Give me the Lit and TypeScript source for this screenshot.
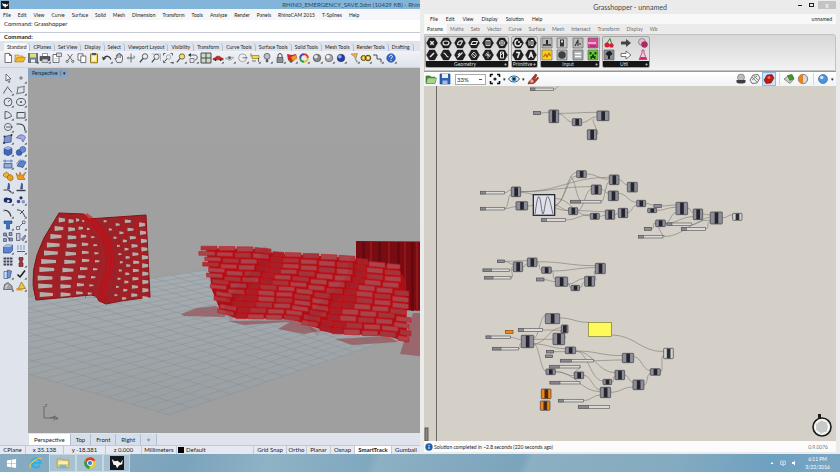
import { LitElement, html, svg, css } from "lit";
import { customElement } from "lit/decorators.js";
import { classMap } from "lit/directives/class-map.js";

type Shape = [d: string, fill?: string, stroke?: string, width?: number];
type Icon = { name: string; shapes: Shape[] };
type Pt = [number, number];

const K = "#3a3d42";
const Y = "#f0b72c";
const B = "#3f66b8";
const G = "#8f9399";
const circ = (x: number, y: number, r: number) =>
  `M${x - r} ${y}a${r} ${r} 0 1 0 ${2 * r} 0a${r} ${r} 0 1 0 ${-2 * r} 0z`;
const line = (d: string, stroke = K, width = 0.8): Shape => [d, "none", stroke, width];
const ico = (name: string, ...shapes: Shape[]): Icon => ({ name, shapes });
const corner: Shape = ["M11.6 9.4v2.2h-2.2z", "#333"];

const drawIcon = (i: Icon) => html`<svg class="icon" viewBox="0 0 12 12" aria-hidden="true">
  ${i.shapes.map(([d, f = "none", s = "none", w = 0.6]) =>
    svg`<path d=${d} fill=${f} stroke=${s} stroke-width=${w} stroke-linejoin="round"></path>`)}
</svg>`;

const ball = (name: string, base: string, shine: string): Icon =>
  ico(name, [circ(6, 6, 3.8), base, "#333", 0.5], [circ(4.9, 4.7, 1.8), shine], corner);

const toolbar: Icon[] = [
  ico("New", ["M3 1.5h4.5l2 2v7H3z", "#fff", K, 0.7], line("M7.5 1.5v2h2")),
  ico("Open", ["M1 10V3h3.5l1 1H9v1.5", "#f7d36b", "#a87512", 0.6], ["M1 10l2-4.6h8.5L9.3 10z", Y, "#a87512", 0.6]),
  ico("Save", ["M1.5 1.5h9v9h-9z", "#6c7f8f", "#2e3c48", 0.6], ["M3 1.5h6v4H3z", "#d8e27a"], ["M4 7.5h4v3H4z", "#eef"], corner),
  ico("Print", ["M3.5 1.5h5v3h-5z", "#fff", K, 0.5], ["M1 4.5h10v4H1z", "#55595f", "#222", 0.5], ["M3 7h6v3.5H3z", "#cfd3d8", K, 0.5], corner),
  ico("Document properties", ["M2 2.5h6v8H2z", "#fff", K, 0.7], ["M5.5 1h5v3.5h-5z", "#d7dbe2", K, 0.6], line("M3.5 6.5h3M3.5 8.3h3", G, 0.5)),
  ico("Cut", line("M3.5 2l4.6 6.4M8.5 2L3.9 8.4", K, 0.7), line(circ(3.2, 9.4, 1.1) + circ(8.8, 9.4, 1.1), K, 0.7)),
  ico("Copy", ["M2 1.8h5v6.4H2z", "#fff", K, 0.7], ["M4.8 4h5v6.6h-5z", "#fff", K, 0.7]),
  ico("Paste", ["M2.5 2h7v8.8h-7z", "#f5dc4e", "#7a5c10", 0.8], ["M4 1h4v2H4z", "#555"], ["M4 4h4v5H4z", "#fdf6c0"]),
  ico("Undo", line("M3 6.2c2-3 5.500-2.500 7 1.300", K, 1.3), ["M1 4.500l1 4 3-2z", K], corner),
  ico("Pan", line("M4 10.500L1.800 6.500l1.600.2V3.200h1.200V2h1.300V1.600h1.300v1h1.300v1.200h1V8l-1.200 2.600z", K, 0.7), line("M4.700 3v3M6.100 2v4M7.500 2.600V6", K, 0.5)),
  ico("Rotate view", line("M6 1.500v9M3 6h6.500", K, 0.7), ["M1.200 6l2.500-1.800v3.600zM10.500 5l-2-2v3z", G]),
  ico("Zoom", line(circ(7, 4.400, 2.700), K, 0.8), line("M5 6.500L1.800 10.300", K, 1.2)),
  ico("Zoom window", line("M1.500 2h9v7", G, 0.6), line(circ(6.500, 4.800, 2.600), K, 0.7), line("M4.600 6.800L1.800 10.300", K, 1.100)),
  ico("Zoom extents", line("M1.500 3.500v-2h2M8.500 1.500h2v2M1.500 8.500v2h2M8.500 10.500h2", K, 0.8), line(circ(6.500, 5, 2.200), G, 0.7), line("M5 6.800L2.500 9.500", K, 1), corner),
  ico("Zoom selected", [circ(7, 4.500, 2.700), "#f3df62", K, 0.7], line("M5 6.500L1.800 10.300", K, 1.100), corner),
  ico("Undo view", line("M2 3h6c3 0 3 5 0 5", K, 0.8), ["M1 3l3-2v4z", K], line("M3 6.500h4v4H3z", K, 0.6), corner),
  ico("Four views", ["M1 1h10v10H1z", "#cfd8c4", K, 0.9], line("M6 1v10M1 6h10", K, 0.9)),
  ico("Shade car", ["M1 6.500l2-.8 1.500-1.500h3.200l1.500 1.500 2 .6v1.500H1z", "#c92a27", "#6f1010", 0.4], [circ(3.500, 8, 0.9) + circ(8.700, 8, 0.9), "#222"], corner),
  ico("Set plane", ["M1 6.500l4-2 5 1-4 3z", "#c3c6ca", G, 0.5], [circ(5.500, 5.800, 1.200), "#555"], corner),
  ico("Object snap", [circ(5.500, 5.800, 3.900), "#eef0f3", G, 0.8], line("M5.500 5.800h5", K, 0.7), corner),
  ico("Annotate", ["M3 3.500h7v3H3z", "#f2dc3e", "#7a6a10", 0.6], line("M2 1.500v3M9.500 6v4M3 9h4", K, 0.7), corner),
  ico("Show objects", [circ(6, 4.300, 3), "#b9bcc0", K, 0.6], ["M4.800 7.200h2.400v3H4.800z", "#54585e"], corner),
  ico("Lock objects", line("M4 5.500V3.600a2 2 0 0 1 4 0v1.900", K, 1), ["M3 5.500h6v5H3z", "#8d9197", K, 0.6], corner),
  ico("Layers", ["M1 2l5 1 4-1 1 4-4 3.500L2 8z", "#d3261d"], ["M5 5l5-2 .8 4-4 2z", "#e89a25"], ["M2 8l5 1.500L5 11z", "#263"], corner),
  ico("Colour wheel", line("M6 2.200A3.800 3.800 0 0 1 9.800 6", "#e13d2e", 2), line("M9.800 6A3.800 3.800 0 0 1 6 9.800", "#e4c62c", 2), line("M6 9.800A3.800 3.800 0 0 1 2.200 6", "#2c9b49", 2), line("M2.200 6A3.800 3.800 0 0 1 6 2.200", "#5a3fc0", 2), corner),
  ball("Shaded", "#85888c", "#e9ebee"),
  ball("Rendered", "#a6a9ae", "#fafafa"),
  ball("Raytraced", "#1d3fa8", "#9ab4f2"),
  ico("Spotlight", ["M3 2l6.500-.5L8 6z", "#e9b34d", "#84551a", 0.4], ["M7 5l3 5-1.500.5-2.200-5z", G], corner),
  ico("Options", [circ(3.500, 6, 2.500) + circ(8, 6, 2.800), "#d9ba38", "#5e4b10", 1], [circ(3.500, 6, 0.8) + circ(8, 6, 0.9), "#fff"], corner),
  ico("Dimensions", line("M2 3h3v4h4v3", K, 0.9), [circ(2, 3, 1) + circ(9, 9.500, 1), G], corner),
  ico("Help", [circ(6, 6, 4.300), "#3564c9", "#1b3f94", 0.5], line("M4.600 4.700c0-2 3-1.800 2.800 0C7.200 5.600 6 5.800 6 7.100M6 8v1", "#fff", 1), corner),
];

const side: Icon[] = [
  ico("Select", ["M4 2l5 5H6.500L8 10l-1.300.5L5.400 7.500 4 9z", "#fff", K, 0.7]),
  ico("Point", line(circ(6, 6, 1.200), K, 0.7), corner),
  ico("Polyline", line("M1.500 9l4-6 4.500 5.500", K, 0.8), [circ(1.800, 9, 0.8) + circ(5.500, 3, 0.8), G], corner),
  ico("Curve", line("M2 9.500l1-6 6-1v6z", K, 0.7), [circ(2, 9.500, 1) + circ(3, 3.500, 1) + circ(9, 2.500, 1), G], corner),
  ico("Circle", line(circ(6, 6, 4), K, 0.8), line("M6 6l2.500-2.500", K, 0.7), corner),
  ico("Ellipse", line("M1.500 6a4.500 3.500 0 1 0 9 0a4.500 3.500 0 1 0-9 0z", K, 0.8), [circ(6, 6, 0.9), K], corner),
  ico("Arc", line("M3 10V2.500c4 0 6 2 6.500 5z", K, 0.8), corner),
  ico("Rectangle", line("M2 3.500h8v5.500H2z", K, 0.9), [circ(2, 9, 0.9) + circ(10, 3.500, 0.9), G], corner),
  ico("Polygon", line(circ(6, 6, 3.600), K, 0.7), line("M4 6h4M8.500 6h2.500", K, 0.8), corner),
  ico("Fillet", line("M1.500 3h3c3.500 0 5.500 2.500 5.500 7", K, 1.100), corner),
  ico("Surface", ["M2.500 3.500L9.500 2 9 9 2 10z", "#8095cf", "#2c3f80", 0.7], [circ(2.500, 3.500, 1) + circ(9.500, 2, 1) + circ(2, 10, 1), "#333"], corner),
  ico("Loft", ["M1.500 5C4 1 8 1 10.500 4L8 9C7 6 5 5 1.500 5z", "#a5a9dc", "#40479a", 0.6], corner),
  ico("Box", ["M2 3.500l4-1.800 4 1.500v5.500L6 10.800 2 9z", B, "#1f3a7c", 0.5], ["M2 3.500l4-1.800 4 1.500-4 1.600z", "#9fb6ea"], corner),
  ico("Sphere group", [circ(4.200, 7.500, 3), B, "#1f3a7c", 0.5], [circ(7.800, 4.500, 3), "#6d8bd4", "#1f3a7c", 0.5], corner),
  ico("Extrude", ["M2 5.500h8v4.500H2z", "#8fabd8", "#2a4a86", 0.7], line("M1 3h10M3 1.500v3M9 1.500v3", B, 0.8), corner),
  ico("Offset surface", ["M2 8l3-5 6 1-3 5.500z", "#5d84c6", "#23427e", 0.6], line("M1.500 6l3-4 5 .5", B, 0.7), corner),
  ico("Boolean", ["M1.500 4l3-2 2.500 2v2.500l-3 1-2.500-1.500z", Y, "#85570c", 0.6], ["M5.500 6l3-1.500L11 6.500v2.800L8.500 11 5.500 9z", "#e9a21f", "#85570c", 0.6]),
  ico("Explode", ["M1 3l3 3 1-4 1.500 3.800L11 2 8.500 6.500 10 9.500H3z", "#f09a1a", "#8a4c06", 0.5]),
  ico("Trim", ["M6.500 1l1 1v5h-2z", B, "#1b2f6b", 0.5], line("M1.500 8h5M6.500 8l3 2.500", K, 1.200), corner),
  ico("Split", ["M6.500 1l1 1v5h-2z", B, "#1b2f6b", 0.5], line("M1.500 8.500h9", K, 1.400)),
  ico("Join", [circ(4.300, 6, 2.600) + circ(7.500, 6.500, 2.600), "#1c2c66"], [circ(6.300, 7, 1.300), "#cdd6f2"], corner),
  ico("Group", [circ(3.500, 7.500, 1.800), "#3c4f99"], [circ(8.300, 7.800, 1.800), "#8692c4"], [circ(6, 3.800, 1.600), "#2b2e55"], corner),
  ico("Extend", line("M2 3.500c3.500-.5 6 2 7 6", K, 1.300), [circ(2, 3.500, 0.9), G], corner),
  ico("Edit points", line("M2 3c3.500-.5 6 2 8 7M5 7L9 3", K, 1), corner),
  ico("Text", ["M2 2h8v2.500H7.500V10H4.500V4.500H2z", "#3b74c4", "#173d78", 0.6], corner),
  ico("Move", line("M4.500 7.500L8 4", K, 0.7), line("M1.500 7.500h3v3h-3zM7.500 2h2.500v2.500H7.500z", "#5c6068", 0.8), corner),
  ico("Array", ["M1.500 2h3v3h-3zM7 1.500h3v3H7zM1.500 7.500h3v3h-3zM7 7h3.500v3H7z", "#8c9abb", "#34415f", 0.6], line("M4 4l4 5", K, 0.8)),
  ico("Scale", ["M1.500 2.500h3.500v7H1.500z", "#c4cde6", "#334", 0.6], ["M6.500 8l3.500-4 1 1-3 5z", "#8fa0d0", "#334", 0.5], corner),
  ico("Solid tools", ["M1.500 4L4 2h6.500v5.500L8 10H1.500z", "#5c83ce", "#1f3a7c", 0.6], ["M1.500 4L4 2h6.500L8 4z", "#a9c0ee"], corner),
  ico("Project", line("M3 2v5M6 2v5M9 2v5", "#7191cf", 0.9), line("M2 8.500h8", K, 0.8), corner),
  ico("Grid", line("M1.500 2.500h9M1.500 5.500h9M1.500 8.500h9", "#40485c", 1.800), line("M4.500 1.500v9M7.500 1.500v9", "#dfe2ea", 0.7)),
  ico("Clamp", ["M4 1.500h4v2.500H7.200v3H8v3.500H4V7h.8V4H4z", "#a93b3b", "#501515", 0.6], corner),
  ico("Pages", ["M2 3.500h4v7H2z", "#cfd9f0", "#2b447e", 0.6], ["M5.500 2l4 1-1.500 7-3-.8z", "#6d93d8", "#2b447e", 0.6], corner),
  ico("Check", line("M2.500 6.500L5 9l5-6.500", "#1e1e22", 1.500), corner),
  ico("Weights", ["M1.500 9.500l1-5 3.500-2 4 3.500.5 3.500z", "#9fa2a6", K, 0.6], line("M4 9V6l2-1", "#fff", 0.7), corner),
  ico("Light", ["M3 9L6.500 2l4 6.500z", "#eac83a", "#7a5a10", 0.6], ["M1.500 8h6v2.500h-6z", "#d79a2c"], corner),
];

const menus = ["File", "Edit", "View", "Curve", "Surface", "Solid", "Mesh", "Dimension", "Transform", "Tools", "Analyze", "Render", "Panels", "RhinoCAM 2015", "T-Splines", "Help"];
const toolTabs = ["Standard", "CPlanes", "Set View", "Display", "Select", "Viewport Layout", "Visibility", "Transform", "Curve Tools", "Surface Tools", "Solid Tools", "Mesh Tools", "Render Tools", "Drafting"];
const lerp = (a: number, b: number, t: number) => a + (b - a) * t;

/* Interpolates a polyline: the key column is 0, the value column is 1. */
const along = (pts: Pt[], k: number): number => {
  for (let i = 1; i < pts.length; i++)
    if (k <= pts[i][0]) return lerp(pts[i - 1][1], pts[i][1], (k - pts[i - 1][0]) / (pts[i][0] - pts[i - 1][0]));
  return pts[pts.length - 1][1];
};
const f1 = (n: number) => n.toFixed(1);
const poly = (p: Pt[]) => p.map(([x, y]) => `${f1(x)},${f1(y)}`).join(" ");

/* Perspective mapping of the unit square onto the construction plane. */
const plane = (() => {
  const [a, b, c, d]: Pt[] = [[169, 415], [480, 309], [320, 253], [-146, 323]];
  const dx1 = b[0] - c[0], dx2 = d[0] - c[0], sx = a[0] - b[0] + c[0] - d[0];
  const dy1 = b[1] - c[1], dy2 = d[1] - c[1], sy = a[1] - b[1] + c[1] - d[1];
  const den = dx1 * dy2 - dx2 * dy1;
  const g = (sx * dy2 - dx2 * sy) / den, h = (dx1 * sy - sx * dy1) / den;
  return (u: number, v: number): Pt => {
    const w = g * u + h * v + 1;
    return [
      ((b[0] - a[0] + g * b[0]) * u + (d[0] - a[0] + h * d[0]) * v + a[0]) / w,
      ((b[1] - a[1] + g * b[1]) * u + (d[1] - a[1] + h * d[1]) * v + a[1]) / w,
    ];
  };
})();
const gridPath = (() => {
  let d = "";
  const n = 24;
  for (let i = 0; i <= n; i++)
    for (const [p, q] of [[plane(i / n, 0), plane(i / n, 1)], [plane(0, i / n), plane(1, i / n)]])
      d += `M${f1(p[0])} ${f1(p[1])}L${f1(q[0])} ${f1(q[1])}`;
  return d;
})();

/* Perforated screen: left fan and right flat panel around a folded ridge. */
const leftX: Pt[] = [[0, 59], [0.3, 44], [0.55, 36], [0.78, 32], [1, 36]];
const ridgeX: Pt[] = [[0, 84], [0.1, 92], [0.3, 105], [0.55, 110], [0.75, 106], [1, 100]];
const holes = (() => {
  const out: Pt[][] = [];
  const hole = (x: number, y: number, w: number, h: number, t: number) =>
    out.push([[x - w / 2, y - h / 2], [x + w / 2, y - h * t / 2], [x + w / 2, y + h * t / 2], [x - w / 2, y + h / 2]]);
  for (let r = 0; r < 10; r++) {
    [[0.17, 0.2, 5], [0.46, 0.15, 4.4], [0.67, 0.1, 3.4], [0.83, 0.06, 2.4]].forEach(([u, w, h], c) => {
      const v = (r + 0.5 + (c % 2) * 0.12) / 10;
      const l = along(leftX, v), m = along(ridgeX, v);
      hole(lerp(l, m, u), lerp(216, 299 - u * 3, v), (m - l) * w, h, 0.6);
    });
    [[0.3, 3, 2.400], [0.48, 4, 3], [0.68, 6, 3.600], [0.91, 6, 4.600]].forEach(([u, w, h], c) => {
      const v = (r + 0.4 + (c % 2) * 0.4) / 10;
      const m = along(ridgeX, v);
      hole(lerp(m, 147 + v * 3, u), lerp(218, 300, v), w, h, 0.6);
    });
  }
  return out;
})();
const meshLines = (() => {
  let d = "";
  for (const u of [0.3, 0.58, 0.77, 0.92, 1, 1.05])
    for (let v = 0; v < 10; v++) {
      const a = v / 10, b = (v + 1) / 10;
      d += `M${f1(lerp(along(leftX, a), along(ridgeX, a), u))} ${f1(lerp(214, 298, a))}L${f1(lerp(along(leftX, b), along(ridgeX, b), u))} ${f1(lerp(214, 298, b))}`;
    }
  for (const x of [124, 136, 141]) d += `M${x} 219L${x + 3} 298`;
  return d;
})();

/* Brick wall: courses follow the curves of its top and foot. */
const wallTop: Pt[] = [[190, 246], [258, 247], [278, 252], [320, 254], [350, 256], [376, 262], [402, 265], [420, 267]];
const wallFoot: Pt[] = [[190, 308], [217, 312], [234, 320], [290, 321], [303, 325], [331, 335], [388, 338], [411, 345], [420, 347]];
const rows = 12;
const bricks = (() => {
  const out: { p: Pt[]; tone: string }[] = [];
  const step = (x: number, r: number) => lerp(along(wallTop, x), along(wallFoot, x), r / rows);
  for (let r = 0; r < rows; r++) {
    const start = 201 + r * 1.9 - (r % 2) * 4;
    const end = 400 + Math.min(r, 5) * 2.2 - (r % 2) * 2;
    for (let x = start, i = 0; x < end - 5; i++) {
      const bend = Math.min(Math.abs(x - 268 + r * 3), Math.abs(x - 356 + r * 3));
      const w = bend < 10 ? 11 : 16;
      const e = Math.min(x + w, end);
      const h = (along(wallFoot, x) - along(wallTop, x)) / rows - 1.5;
      /* Each brick lies almost level, so the course climbs in small steps. */
      const y1 = step((x + e) / 2, r), tilt = (step(e, r) - step(x, r)) * 0.25;
      out.push({
        p: [[x, y1 - tilt], [e, y1 + tilt], [e, y1 + tilt + h], [x, y1 - tilt + h]],
        tone: bend < 10 ? "#a3222a" : (i + r) % 3 ? "#a8444b" : "#a1363d",
      });
      x = e + (w > 13 ? 2 : 1);
    }
  }
  return out;
})();
const wallBody = (() => {
  const p: Pt[] = [];
  for (let x = 206; x <= 396; x += 5) p.push([x, along(wallTop, x) + 2]);
  p.push([406, 280], [407, 343]);
  for (let x = 404; x >= 232; x -= 4) p.push([x, along(wallFoot, x) - 2]);
  p.push([220, 310], [212, 290]);
  return p;
})();

const scene = () => svg`
  <defs>
    <linearGradient id="sky" x1="0" y1="0" x2="0" y2="1"><stop offset="0" stop-color="#a1a1a1"/><stop offset="1" stop-color="#9b9b9b"/></linearGradient>
    <linearGradient id="floor" x1="0" y1="0" x2="0" y2="1"><stop offset="0" stop-color="#a8afb3"/><stop offset="1" stop-color="#9a9ea1"/></linearGradient>
  </defs>
  <rect x="28" y="68" width="900" height="900" fill="url(#sky)"/>
  <polygon points=${poly([plane(0, 0), plane(1, 0), plane(1, 1), plane(0, 1)])} fill="url(#floor)"/>
  <path d=${gridPath} fill="none" stroke="#7c8b98" stroke-width=".4" opacity=".85"/>
  <polygon points="381,344 480,309 480,280 415,270 400,330" fill="#9d9d9d"/>
  <g fill="#96565b" opacity=".75">
    <polygon points="181,314 197,308 216,306 228,314 224,317 184,316"/>
    <polygon points="228,321 244,325 290,322 278,329 304,334 318,331 300,320"/>
    <polygon points="335,339 352,345 398,342 388,336"/>
    <polygon points="400,354 413,313 470,313 470,362"/>
  </g>
  <polygon points="356,241 470,242 470,313 400,310 356,260" fill="#790c12"/>
  ${[362, 370, 378, 388, 397, 404, 411, 416].map((x, i) => svg`<rect x=${x} y="242" width=${i % 2 ? 2 : 3} height="69" fill=${i % 2 ? "#9b1a20" : "#5b0a0e"} opacity=".7"/>`)}
  <polygon points=${poly(wallBody)} fill="#ab0f16"/>
  ${bricks.map((b) => svg`<polygon points=${poly(b.p)} fill=${b.tone} stroke="#cb161e" stroke-width=".6"/>`)}
  <path d="M262 249C272 258 258 272 244 286S224 306 234 318M350 260C362 272 340 292 326 304S306 322 320 332" fill="none" stroke="#98060c" stroke-width="9" opacity=".15"/>
  <path d="M59 213L84 214 88 219 146 215 150 297 121 301 106 304 99 301 96 296 91 295 36 300Q27 272 44 238Z" fill="#9c2228" stroke="#8c1015" stroke-width="1"/>
  <path d="M85 216C98 224 112 242 110 263S99 284 104 301" fill="none" stroke="#c00d15" stroke-width="7" opacity=".55"/>
  <path d=${meshLines} fill="none" stroke="#c9161e" stroke-width=".8" opacity=".8"/>
  ${holes.map((h) => svg`<polygon points=${poly(h)} fill="#b4aeab"/>`)}
  <path d="M44 406V418H50L58 418M50 418L56 416" fill="none" stroke="#5b5b5b" stroke-width=".8"/>
  <text class="axis" x="45" y="407">z</text><text class="axis" x="53" y="420">yx</text>`;

type Node = [x: number, y: number, w: number, h: number];
type Pt3 = [number, number, number];
type Graph = { nodes: Node[]; light: Node[]; tags: Node[]; sliders: Pt3[]; wires: Node[] };

/* Both definitions are plotted on a sheet three units to the pixel. */
const upper: Graph = {
  nodes: [[237, 90, 29, 38], [307, 116, 28, 21], [381, 93, 36, 29], [352, 149, 28, 30], [320, 272, 29, 21], [418, 285, 29, 29], [472, 307, 30, 29], [364, 315, 30, 28], [415, 333, 30, 29], [124, 321, 28, 29], [138, 365, 35, 25], [296, 383, 27, 21], [361, 400, 27, 18], [406, 390, 28, 28], [445, 385, 28, 28], [500, 361, 27, 19], [533, 385, 27, 13], [618, 367, 35, 37], [670, 387, 28, 32], [721, 396, 36, 36], [557, 420, 29, 20]],
  light: [[788, 400, 28, 21]],
  tags: [[190, 94, 22, 10], [552, 373, 22, 10], [523, 442, 22, 9]],
  sliders: [[181, 24, 70], [31, 334, 73], [31, 382, 73], [302, 361, 91], [214, 416, 73], [591, 429, 74], [634, 443, 73], [506, 466, 73]],
  wires: [[251, 28, 274, 14], [212, 99, 237, 97], [266, 100, 381, 97], [266, 102, 307, 126], [335, 128, 381, 110], [381, 163, 372, 118], [152, 335, 418, 292], [152, 335, 364, 320], [152, 337, 296, 392], [104, 338, 124, 330], [104, 386, 124, 343], [104, 386, 138, 380], [173, 378, 190, 376], [254, 376, 320, 277], [254, 376, 320, 288], [254, 376, 296, 392], [349, 282, 418, 298], [447, 299, 472, 315], [254, 355, 361, 408], [287, 420, 361, 404], [323, 392, 364, 328], [323, 392, 406, 395], [393, 366, 418, 305], [300, 290, 335, 364], [394, 328, 415, 340], [445, 340, 500, 367], [434, 404, 445, 400], [388, 409, 406, 406], [473, 398, 500, 375], [527, 370, 552, 376], [574, 378, 618, 375], [560, 391, 618, 382], [586, 430, 618, 398], [653, 385, 670, 397], [698, 402, 721, 405], [665, 434, 721, 412], [707, 447, 721, 424], [580, 470, 721, 420], [545, 446, 557, 428], [757, 414, 788, 404], [553, 430, 585, 468], [586, 430, 670, 410]],
};
const lower: Graph = {
  nodes: [[130, 51, 28, 29], [172, 39, 29, 26], [215, 66, 29, 19], [256, 96, 37, 28], [303, 121, 26, 16], [344, 94, 30, 30], [376, 55, 30, 31], [226, 206, 43, 30], [274, 240, 20, 24], [249, 265, 35, 34], [154, 271, 37, 37], [286, 306, 31, 20], [457, 325, 34, 28], [228, 372, 28, 17], [313, 381, 28, 20], [435, 376, 29, 28], [541, 371, 30, 20], [399, 403, 26, 16], [489, 405, 33, 29], [391, 427, 31, 31]],
  light: [[581, 310, 29, 31]],
  tags: [[82, 45, 22, 8], [200, 99, 22, 9], [229, 316, 22, 8], [226, 330, 22, 8]],
  sliders: [[39, 72, 80], [43, 94, 80], [145, 251, 73], [48, 273, 73], [67, 307, 79], [271, 343, 100], [238, 361, 92], [240, 409, 90], [265, 463, 76], [325, 482, 93]],
  wires: [[104, 49, 172, 47], [104, 49, 130, 58], [119, 76, 130, 66], [123, 98, 130, 73], [158, 66, 172, 57], [201, 50, 376, 62], [201, 52, 215, 75], [244, 78, 376, 68], [244, 78, 256, 102], [222, 104, 256, 110], [293, 115, 303, 127], [293, 118, 344, 100], [329, 128, 344, 112], [374, 106, 376, 78], [191, 280, 226, 212], [269, 219, 355, 232], [218, 255, 274, 256], [121, 277, 154, 284], [146, 311, 154, 296], [191, 283, 249, 283], [191, 297, 274, 248], [191, 297, 286, 311], [191, 297, 228, 379], [284, 280, 274, 256], [424, 270, 581, 320], [251, 320, 286, 320], [317, 318, 457, 332], [317, 318, 435, 383], [317, 318, 399, 408], [371, 347, 457, 345], [330, 365, 313, 386], [256, 380, 391, 440], [256, 380, 313, 392], [341, 391, 391, 434], [425, 411, 435, 395], [464, 390, 489, 412], [422, 442, 489, 426], [491, 335, 541, 377], [522, 420, 541, 386], [571, 381, 581, 332], [341, 467, 391, 450]],
};

const curve = ([x1, y1, x2, y2]: Node) => {
  const k = Math.max(12, Math.abs(x2 - x1) * 0.45);
  return `M${x1} ${y1}C${x1 + k} ${y1} ${x2 - k} ${y2} ${x2} ${y2}`;
};
const block = ([x, y, w, h]: Node, body: string, core: string) => svg`
  <rect x=${x} y=${y} width=${w} height=${h} rx="2" fill=${body} stroke="#3c3c44" stroke-width="2"/>
  <rect x=${x + w / 2 - 5} y=${y + 1} width="11" height=${h - 2} fill=${core}/>`;
const graph = (g: Graph) => svg`
  ${g.wires.map((w) => svg`<path d=${curve(w)} fill="none" stroke="#7a7872" stroke-width="1.800"/>`)}
  ${g.sliders.map(([x, y, w]) => svg`
    <rect x=${x} y=${y} width=${w} height="8" fill="#dcdad8" stroke="#5c5c5e" stroke-width="2"/>
    <rect x=${x} y=${y} width=${Math.round(w * (w > 76 ? 0.33 : 0.2))} height="8" fill="#8b8a92" stroke="#5c5c5e" stroke-width="2"/>`)}
  ${g.nodes.map((n) => block(n, "#8e8d99", "#25262c"))}
  ${g.light.map((n) => block(n, "#d2d2d0", "#2c2d31"))}
  ${g.tags.map(([x, y, w, h]) => svg`<rect x=${x} y=${y} width=${w} height=${h} fill="#8f8e98" stroke="#4a4a50" stroke-width="2"/>`)}`;

const definition = () => svg`
  <rect x="424" y="86" width="1200" height="900" fill="#d4d0c8"/>
  <path d="M436.500 86V900" stroke="#6b6862" stroke-width="1"/>
  <g transform="translate(470 80) scale(.3333)">
    ${graph(upper)}
    <rect x="190" y="344" width="64" height="62" fill="#dfe0ea" stroke="#2d2e34" stroke-width="4"/>
    <path d="M195 402C200 370 202 350 207 350S215 402 219 402 227 350 233 350 243 380 249 402" fill="none" stroke="#33343a" stroke-width="2"/>
  </g>
  <g transform="translate(470 245) scale(.3333)">
    ${graph(lower)}
    <rect x="106" y="256" width="23" height="9" fill="#f08a1c" stroke="#7d460b" stroke-width="2"/>
    ${[[214, 432, 29, 29], [211, 468, 29, 28]].map((n) => block(n as Node, "#f08416", "#4a2a10"))}
    <rect x="355" y="232" width="69" height="42" fill="#fffa5c" stroke="#77752f" stroke-width="2"/>
  </g>
  <rect x="425" y="428" width="3" height="13" fill="#8c8a86" stroke="#45443f" stroke-width=".8"/>
  <circle cx="822" cy="427" r="9" fill="#f1f1f1" stroke="#1c1c1c" stroke-width="1.600"/>
  <circle cx="822" cy="427" r="6.500" fill="#c9c9c9" stroke="#fff" stroke-width="1.200" stroke-dasharray="4 2"/>
  <rect x="818" y="414" width="3" height="4" fill="#1c1c1c"/>`;

const hex: Shape = ["M3.400 1h5.200L11.500 6 8.600 11H3.400L.5 6z", "#1f1f21", "#0c0c0c", 0.4];
const w = (d: string, width = 1.100): Shape => [d, "none", "#e9e9e9", width];
const tile = (fill: string): Shape => ["M1 1h10v10H1z", fill, "#555", 0.6];
const ribbon: { name: string; cls: string; clusters: Icon[][] }[] = [
  { name: "Geometry", cls: "geo", clusters: [
    [ico("Point", hex, w("M4.300 4.300l3.400 3.400M7.700 4.300L4.300 7.700", 1.400)), ico("Vector", hex, w("M4 8l4-4", 1.600))],
    [ico("Circle", hex, w("M3 6a3 2 0 1 0 6 0a3 2 0 1 0-6 0z")), ico("Curve", hex, w("M3.500 4c3 0 2 4 5 4"))],
    [ico("Arc", hex, w("M3.500 7.500c0-3 2-4 5-3.500l-2 4z")), ico("Line", hex, w("M3.500 8.500l5-5M4 6l2-2"))],
    [ico("Plane", hex, w("M3 7.500l1.500-3h5l-1.500 3z")), ico("Rectangle", hex, w("M6 3l2.500 3L6 9 3.500 6zM4 4l4 4", 0.8))],
    [ico("Brep", hex, w("M4 3.500h4v5H4zM6 3.500v5", 0.8)), ico("Mesh", hex, w("M6 2.500v7M3 6h6M4 4l4 4", 0.8))],
    [ico("Surface", hex, w("M3 6h6M6 3v6" + circ(6, 6, 2.500), 0.8)), ico("Geometry", hex, w("M4.500 3h3v6h-3zM4.500 6l3-2", 1))],
  ] },
  { name: "Primitive", cls: "prim", clusters: [
    [ico("Boolean", hex, w("M6 3a3 3 0 1 0 3 3", 1.400), [circ(7, 5, 1), "#eee"]), ico("Integer", hex, w("M4 3.500h3.500L5.500 9", 1.500))],
    [ico("Number", hex, w("M4 3.500v5M6 3.500h2v5H6z", 1)), ico("Text", hex, w("M4 9l2-6 2 6M4.800 7h2.400", 1.300))],
  ] },
  { name: "Input", cls: "inp", clusters: [
    [ico("Slider", tile("#b5b5b5"), line("M2 8h8", "#222", 1.400), ["M5 3h2v4H5z", "#222"]), ico("Panel", tile("#f8d21e"), line("M2.500 8l2-3 1.500 3 2-4 1.500 3", "#c85c10", 1.200))],
    [ico("Toggle", tile("#c6c6c6"), ["M4 2.500h4v7H4z", "#333"], ["M5 3.500h2v2H5z", "#ddd"]), ico("Knob", tile("#b9b9b9"), [circ(6, 6, 3.800), "#3e4141"])],
    [ico("Digit scroller", tile("#b8b8b8"), line("M3 9l3-6v6M7 7h2", "#333", 1.100)), ico("List", tile("#a9adb0"), line("M3 4.500h6M3 7.500h6", "#fff", 1.300))],
    [ico("Gradient", tile("#d94b93"), ["M1 5h8v2H1z", "#f4a5cc"], line("M3 9h6", "#801a50", 1)), ico("Colour swatch", tile("#62cf2c"), ["M2.500 3h2v2.500h-2zM7.500 3h2v2.500h-2zM5 5.500h2V7h1.500v3H7V9H5v1H3.500V7H5z", "#1a3c12"])],
  ] },
  { name: "Util", cls: "util", clusters: [
    [ico("Cherry picker", [circ(4, 8, 2.500) + circ(8.500, 8.500, 2.200), "#d41f35"], line("M4 6l3-4.500 1.500 5", "#3c7a26", 1)), ico("Tree statistics", tile("#8a8d90"), ["M2.500 5l2-2.500 3-.5 2 3L7 7v3H5V7z", "#1d1f21"])],
    [ico("Data dam", ["M1 4.500h5V2l5 4-5 4V7.500H1z", "#444"]), ico("Relay", ["M1 4.500h5V2l5 4-5 4V7.500H1z", "#fff", "#555", 0.8])],
    [ico("Cluster", [circ(5, 5, 3.500), "#e5bcd2", "#555", 0.5], [circ(7.500, 7.500, 3), "#b9245f", "#555", 0.5]), ico("Flask", ["M5 1h2v3l3 6.500H2L5 4z", "#f2cfdd", "#b0326c", 0.8], ["M3.500 8h5l1 2.300H2.600z", "#cc2b68"])],
  ] },
];
const preview: { icon: Icon; on?: boolean; gap?: boolean }[] = [
  { icon: ico("No preview", [circ(6, 4.500, 3.500), "#b9bbbd", "#555", 0.5], ["M1.500 7h9v2c0 2-9 2-9 0z", "#3b3d40"]) },
  { icon: ico("Wireframe preview", ["M1 7l3-5 5-.5L11 5l-3 5-5 .5z", "#eceeef", "#555", 0.8], line("M3 4l5 5M4.500 2.500l5 5M3 7l5-4", "#666", 0.7)) },
  { icon: ico("Shaded preview", ["M1 7l3-5 5-.5L11 5l-3 5-5 .5z", "#c01a12", "#611", 0.6], [circ(6, 4.500, 1.500), "#ea6a5e"]), on: true },
  { icon: ico("Selected only", ["M1 6l4-3 6 3-4 4.500z", "#c9ccc8", "#555", 0.6], ["M4.500 2.500L9 1.500l2 4-4 2z", "#3f9a2b", "#26611a", 0.6]), gap: true },
  { icon: ico("Document preview", [circ(6, 6, 4.700), "#d6d8da", "#555", 0.7], ["M6 1.300a4.700 4.700 0 0 0 0 9.400z", "#e28424"]) },
  { icon: ico("Mesh quality", [circ(6, 6, 4.500), "#4d92dc", "#285a95", 0.6], [circ(4.700, 4.500, 1.800), "#cfe5fb"]), gap: true },
];
const openIcon = ico("Open file", ["M1 3h4l1 1.200h4V10H1z", "#4c8f3a", "#2c5c20", 0.6], ["M2.500 5h9L10 10.500H1z", "#a8d68c", "#3c7a2c", 0.5]);
const saveIcon = ico("Save file", ["M1 1h10v10H1z", "#2f64b5", "#1a3c78", 0.6], ["M3 1h6v4H3z", "#e8f0fa"], ["M3.500 7.500h5V11h-5z", "#9dbbe6"]);
const zoomIcon = ico("Zoom extents", line("M1.500 4V1.500H4M8 1.500h2.500V4M10.500 8v2.500H8M4 10.500H1.500V8", "#111", 1.600), [circ(6, 6, 1.600), "#222"]);
const eyeIcon = ico("Named views", ["M.5 6C3 2 9 2 11.500 6 9 10 3 10 .5 6z", "#e9f2f8", "#1e4f73", 0.9], [circ(6, 6, 2.400), "#3784b0"], [circ(6, 6, 1), "#111"]);
const penIcon = ico("Sketch", ["M1 11C2 7 3.500 8 4.500 6L8.500 1l1.500 1L7 8l4-4 .5 1.500L7.500 10c-2 1.500-4 0-6.500 1z", "#b9352a", "#5f1610", 0.5], ["M4.500 6L7 8l-2 2-2-1z", "#e0b6a0"]);

const taskIcons: { icon: Icon; open?: boolean }[] = [
  { icon: ico("Start", ["M1 2.600l4.500-.7v3.800H1zM6.100 1.800L11 1v4.700H6.100zM1 6.300h4.500v3.800L1 9.400zM6.100 6.300H11V11l-4.900-.8z", "#fff"]) },
  { icon: ico("Internet Explorer", line("M9.300 8.300A3.900 3.900 0 1 1 10 6H3.200", "#2fb0ea", 2), line("M1 10.500C-.5 6 8 .5 11 2.500", "#f1c945", 0.9)) },
  { icon: ico("File Explorer", ["M1 2.500h4l1 1h5V10H1z", "#e9ce70", "#a98d35", 0.5], ["M2 4.500h8V7H2z", "#f9eebc"], ["M3 7.500h6v3H3z", "#75b2dc"]), open: true },
  { icon: ico("Chrome", [circ(6, 6, 5), "#f0c92f"], ["M6 6L1.700 3.500A5 5 0 0 1 10.600 4H6z", "#dc3a2c"], ["M6 6L1.600 3.600A5 5 0 0 0 5.600 11z", "#2f9b4b"], [circ(6, 6, 2.200), "#3f7fd6", "#fff", 0.8]), open: true },
  { icon: ico("Rhinoceros", ["M0 0h12v12H0z", "#15181a"], ["M1.500 2.500l2.500 2L6.500 4 9 6l2-3-.5 4L8 8l-2 2.500-1-2.500-2-.5z", "#f4f4f4"]), open: true },
];

@customElement("app-root")
export class AppRoot extends LitElement {
  static styles = css`
    :host { display: flex; flex-direction: column; height: 100vh; overflow: hidden; background: #8fb2c6; color: #1c1e22; font: 6px/10px Lato, "Open Sans", sans-serif; white-space: nowrap; }
    button, input, select { font: inherit; color: inherit; border: 0; padding: 0; margin: 0; background: none; }
    button { flex: none; }
    .icon { display: block; width: 12px; height: 12px; }
    .row { display: flex; align-items: center; }
    .windows { flex: 1; min-height: 0; display: grid; grid-template-columns: minmax(0, 1fr) minmax(0, 1fr); }
    .rhino, .gh { min-width: 0; display: flex; flex-direction: column; overflow: hidden; box-sizing: border-box; }
    .rhino { background: #dfe3ec; }
    .rhino-title { height: 9px; background: #82b5d9; line-height: 9px; justify-content: space-between; }
    .rhino-title .icon { width: 8px; height: 8px; flex: none; margin-left: 1px; }
    .rhino-title span { color: #2f4a60; }
    .menu { height: 11px; padding-left: 3px; gap: 7px; background: #f4f6fa; font-size: 5px; }
    .history { height: 12px; background: #fff; padding: 0 4px; border-bottom: 1px solid #c4c9d4; line-height: 8px; }
    .prompt { height: 8px; background: #fff; padding: 0 4px; margin-bottom: 2px; }
    .prompt label { font-weight: 700; }
    .prompt input { flex: 1; height: 8px; outline: 0; min-width: 0; }
    .tool-tabs { height: 8px; padding-left: 4px; font-size: 5px; }
    .tool-tabs button { height: 8px; line-height: 8px; padding: 0 3px; border-right: 1px solid #b5bfd0; border-radius: 0 4px 0 0; }
    .tool-tabs .current { background: #f5f6fa; }
    .tools { height: 14px; width: 94%; padding-left: 2px; justify-content: space-between; }
    .tool-band { background: linear-gradient(#f1f2f6, #dfe3ec); border-bottom: 1px solid #cdd2dd; height: 16px; }
    .model { flex: 1; min-height: 0; display: flex; }
    .side { width: 28px; flex: none; }
    .side-grid { display: grid; grid-template-columns: 12px 12px; justify-content: center; gap: 0 1px; height: 220px; margin-top: 4px; align-content: space-between; }
    .view { flex: 1; min-width: 0; position: relative; }
    .view > svg, .canvas > svg { display: block; width: 100%; height: 100%; }
    .axis { font: 5px Lato, sans-serif; fill: #5b5b5b; }
    .view-name { position: absolute; left: 0; top: 1px; height: 8px; line-height: 8px; padding: 0 2px 0 4px; background: #83a4c4; font-size: 5px; }
    .view-tabs { height: 12px; padding-left: 29px; }
    .view-tabs button { height: 11px; line-height: 11px; padding: 0 5px; background: #d5deeb; border-right: 1px solid #b4bdcc; }
    .view-tabs .current { background: #fff; }
    .status { height: 8px; display: grid; grid-template-columns: 26px 38px 42px 36px 35px 1fr 33px 20px 24px 24px 37px 28px; background: #e6e9f1; border-top: 1px solid #c2c8d4; line-height: 8px; text-align: center; }
    .status > * { border-right: 1px solid #c2c8d4; }
    .status button:last-child { border-right: 0; }
    .status .on { background: #fff; font-weight: 700; }
    .layer { display: flex; align-items: center; gap: 2px; padding-left: 1px; }
    .swatch { width: 6px; height: 6px; background: #000; }

    .gh { background: #ebebeb; padding: 0 4px; }
    .gh-title { height: 14px; position: relative; font-size: 7px; line-height: 14px; justify-content: center; color: #45474a; }
    .win { position: absolute; right: 0; top: 1px; display: flex; gap: 1px; }
    .win button { width: 11px; height: 8px; line-height: 8px; display: flex; align-items: center; justify-content: center; }
    .win .close { width: 18px; background: #c3c3c3; color: #fff; }
    .win i { width: 5px; height: 4px; border: 1px solid #222; box-sizing: border-box; }
    .win i.min { border-width: 1px 0 0; height: 1px; width: 4px; }
    .gh-menu { height: 10px; background: #f8f8f8; padding: 0 4px 0 6px; gap: 8px; font-size: 5px; }
    .gh-menu span { margin-left: auto; }
    .gh-tabs { height: 10px; line-height: 10px; color: #6d6f72; font-size: 5px; }
    .gh-tabs button { line-height: 10px; height: 10px; padding: 0 4px 0 3px; }
    .gh-tabs .current { background: #fafafa; color: #222; border-radius: 2px 2px 0 0; }
    .ribbon { height: 37px; display: flex; gap: 2px; padding: 1px 0 2px; box-sizing: border-box; background: linear-gradient(#d7d7d7, #f2f2f2); border: 1px solid #c2c2c2; border-radius: 0 3px 0 0; flex: none; }
    .panel { display: flex; flex-direction: column; height: 32px; border: 1px solid #a5a5a5; border-radius: 2px; background: linear-gradient(#d4d4d4, #ececec); box-sizing: border-box; flex: none; }
    .geo { width: 84px; } .prim { width: 27px; } .inp { width: 60px; } .util { width: 48px; }
    .clusters { display: flex; justify-content: space-between; flex: 1; }
    .clusters > div { display: flex; flex-direction: column; justify-content: space-between; }
    .panel footer { height: 6px; line-height: 6px; background: #161616; color: #ddd; text-align: center; font-size: 5px; border-radius: 0 0 1px 1px; }
    .panel footer b { float: right; margin-right: 1px; }
    .gh-bar { height: 15px; background: linear-gradient(#fff, #f1f3f5); border-top: 1px solid #999; padding: 0 2px 0 1px; gap: 2px; box-sizing: border-box; flex: none; }
    .gh-bar select { appearance: none; width: 31px; height: 11px; border: 1px solid #aaa; padding-left: 1px; margin: 0 1px 0 2px; line-height: 9px; box-sizing: border-box; background: linear-gradient(#555, #555) right 3px center / 3px 1px no-repeat #fff; }
    .caret { font-size: 5px; }
    .gh-bar .gap { border-left: 1px solid #c4dcee; padding-left: 3px; margin-left: 2px; }
    .gh-bar .on { background: #cfe4f8; outline: 1px solid #8bbbe6; }
    .grow { flex: 1; }
    .canvas { flex: 1; min-height: 0; }
    .gh-foot { height: 11px; background: #fbfbfb; padding: 0 8px 0 1px; gap: 1px; margin-bottom: 2px; font-size: 5px; }
    .gh-foot .icon { width: 8px; height: 8px; }
    .gh-foot em { margin-left: auto; font-style: normal; color: #777; }

    .taskbar { height: 18px; flex: none; padding: 0 10px 0 0; background: linear-gradient(110deg, #86aabf 0 12%, #7aa3bc 22%, #8fb2c5 32%, #7fa8bf 44%, #8db0c3 45%, #7ba4bc 62%, #8cafc2 63%, #84abc0 80%, #6da0c1 92%, #7ba7c3); color: #fff; }
    .taskbar button { width: 27px; height: 18px; display: flex; align-items: center; justify-content: center; box-sizing: border-box; }
    .taskbar button:first-child { width: 22px; }
    .taskbar .open { background: rgba(214, 228, 236, 0.4); border: 1px solid rgba(225, 236, 243, 0.5); }
    .taskbar .icon { width: 14px; height: 14px; }
    .taskbar button:first-child .icon { width: 11px; height: 11px; }
    .tray { gap: 5px; margin-right: 8px; }
    .taskbar .tray .icon { width: 6px; height: 6px; }
    .clock { text-align: center; line-height: 8px; font-size: 5px; }
  `;

  private btn = (i: Icon, cls = "") => html`<button class=${cls} aria-label=${i.name}>${drawIcon(i)}</button>`;

  private rhino() {
    return html`<section class="rhino">
      <header class="rhino-title row">${drawIcon(taskIcons[4].icon)}<span>RHINO_EMERGENCY_SAVE.3dm (10429 KB) - Rhin</span></header>
      <nav class="menu row">${menus.map((m) => html`<button>${m}</button>`)}</nav>
      <div class="history">Command: Grasshopper</div>
      <div class="prompt row"><label for="cmd">Command:</label><input id="cmd" type="text" /></div>
      <nav class="tool-tabs row">${toolTabs.map((t, i) => html`<button class=${classMap({ current: i === 0 })}>${t}</button>`)}</nav>
      <div class="tool-band"><div class="tools row">${toolbar.map((i) => this.btn(i))}</div></div>
      <div class="model">
        <aside class="side"><div class="side-grid">${side.map((i) => this.btn(i))}</div></aside>
        <div class="view">
          <svg viewBox="28 68 392 367" preserveAspectRatio="xMinYMin slice" role="img" aria-label="Perspective viewport">${scene()}</svg>
          <button class="view-name">Perspective │▾</button>
        </div>
      </div>
      <nav class="view-tabs row">${["Perspective", "Top", "Front", "Right", "✧"].map((t, i) => html`<button class=${classMap({ current: i === 0 })}>${t}</button>`)}</nav>
      <footer class="status">
        <button>CPlane</button><span>x 35.138</span><span>y -18.381</span><span>z 0.000</span><span>Millimeters</span>
        <span class="layer"><span class="swatch"></span>Default</span>
        ${["Grid Snap", "Ortho", "Planar", "Osnap", "SmartTrack", "Gumball"].map((t) => html`<button class=${classMap({ on: t === "SmartTrack" })}>${t}</button>`)}
      </footer>
    </section>`;
  }

  private grasshopper() {
    return html`<section class="gh">
      <header class="gh-title row">Grasshopper - unnamed
        <div class="win"><button aria-label="Minimize"><i class="min"></i></button><button aria-label="Maximize"><i></i></button><button class="close" aria-label="Close">x</button></div>
      </header>
      <nav class="gh-menu row">${["File", "Edit", "View", "Display", "Solution", "Help"].map((m) => html`<button>${m}</button>`)}<span>unnamed</span></nav>
      <nav class="gh-tabs row">${["Params", "Maths", "Sets", "Vector", "Curve", "Surface", "Mesh", "Intersect", "Transform", "Display", "Wb"].map((t, i) => html`<button class=${classMap({ current: i === 0 })}>${t}</button>`)}</nav>
      <div class="ribbon">${ribbon.map((p) => html`<div class="panel ${p.cls}">
        <div class="clusters">${p.clusters.map((c) => html`<div>${c.map((i) => this.btn(i))}</div>`)}</div>
        <footer><b>+</b>${p.name}</footer></div>`)}</div>
      <div class="gh-bar row">
        ${this.btn(openIcon)}${this.btn(saveIcon)}
        <select aria-label="Zoom"><option>33%</option></select>
        ${this.btn(zoomIcon)}<span class="caret">▾</span>${this.btn(eyeIcon)}<span class="caret">▾</span>${this.btn(penIcon)}
        <span class="grow"></span>
        ${preview.map((p) => this.btn(p.icon, `${p.on ? "on" : ""} ${p.gap ? "gap" : ""}`))}<span class="caret">▾</span>
      </div>
      <div class="canvas"><svg viewBox="424 86 412 355" preserveAspectRatio="xMinYMin slice" role="img" aria-label="Node canvas">${definition()}</svg></div>
      <footer class="gh-foot row">${drawIcon(ico("Info", [circ(6, 6, 5.500), "#1f5fae"], line("M6 3v1.500M6 5.500V9", "#fff", 1.500)))}<span>Solution completed in ~2.8 seconds (220 seconds ago)</span><em>0.9.0076</em></footer>
    </section>`;
  }

  render() {
    return html`
      <main class="windows">${this.rhino()}${this.grasshopper()}</main>
      <footer class="taskbar row">
        ${taskIcons.map((t) => this.btn(t.icon, t.open ? "open" : ""))}
        <span class="grow"></span>
        <div class="tray row">
          ${drawIcon(ico("More", ["M3 8l3-4 3 4z", "#fff"]))}
          ${drawIcon(ico("Network", line("M1 2h10v7H1zM4 11h4M3 3l6 5M9 3L3 8", "#fff", 1)))}
          ${drawIcon(ico("Sound", ["M2 4h3l3-3v10L5 8H2z", "#fff"]))}
        </div>
        <time class="clock">6:11 PM<br />3/22/2016</time>
      </footer>`;
  }
}
